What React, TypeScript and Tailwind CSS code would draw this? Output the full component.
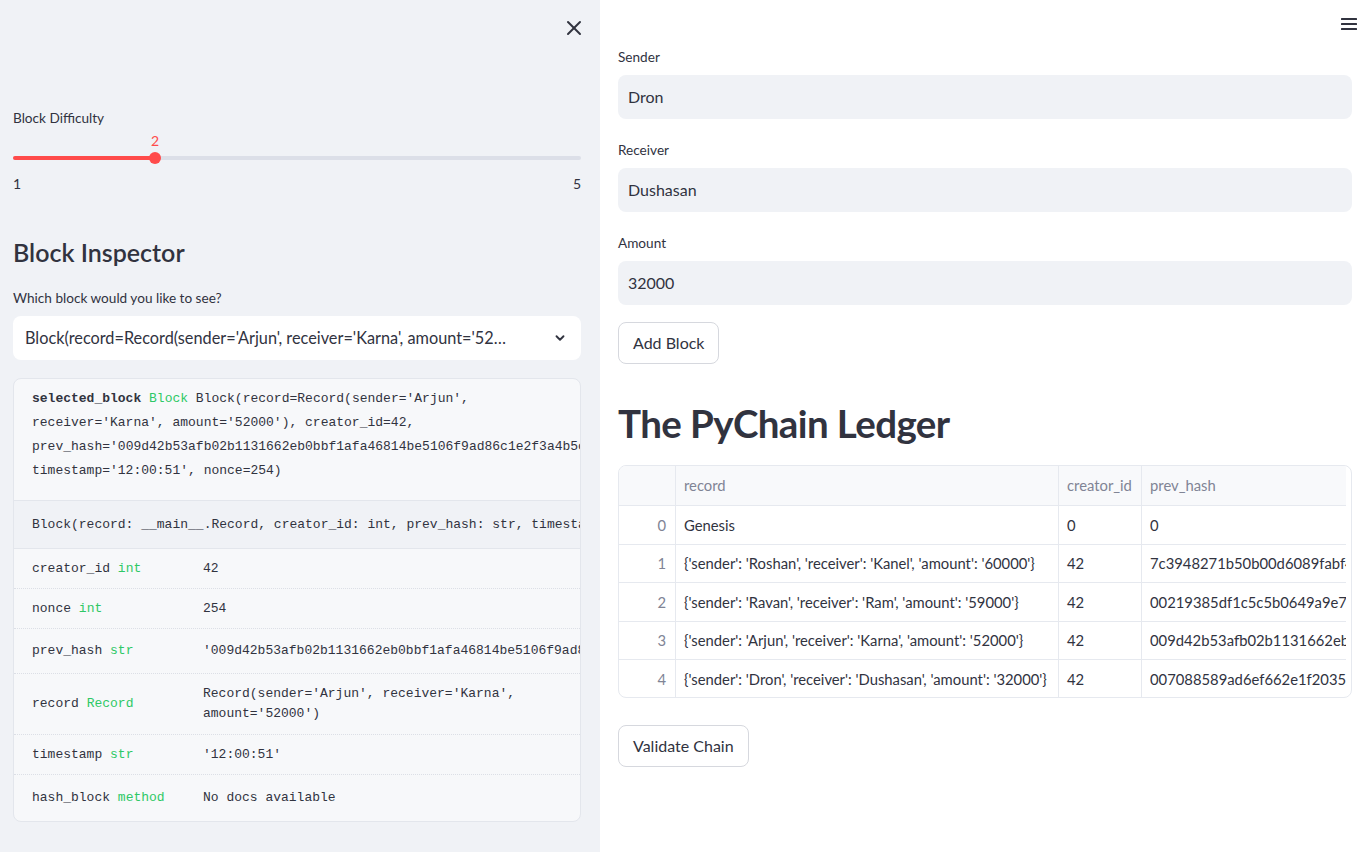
import React from 'react';

const sans = { fontFamily: 'Lato, "Noto Sans", sans-serif' };
const mono = { fontFamily: '"Liberation Mono", "DejaVu Sans Mono", monospace' };

const HASH_3 = '009d42b53afb02b1131662eb0bbf1afa46814be5106f9ad86c1e2f3a4b5c6d7e';

const ledger = [
  { idx: 0, record: 'Genesis', creator: '0', prev: '0' },
  {
    idx: 1,
    record: "{'sender': 'Roshan', 'receiver': 'Kanel', 'amount': '60000'}",
    creator: '42',
    prev: '7c3948271b50b00d6089fabf42a1e09c3b7d5f6e8a2c4b1d0e9f8a7b6c5d4e3f',
  },
  {
    idx: 2,
    record: "{'sender': 'Ravan', 'receiver': 'Ram', 'amount': '59000'}",
    creator: '42',
    prev: '00219385df1c5c5b0649a9e7821f3c4d5e6a7b8c9d0e1f2a3b4c5d6e7f8a9b0c',
  },
  {
    idx: 3,
    record: "{'sender': 'Arjun', 'receiver': 'Karna', 'amount': '52000'}",
    creator: '42',
    prev: HASH_3,
  },
  {
    idx: 4,
    record: "{'sender': 'Dron', 'receiver': 'Dushasan', 'amount': '32000'}",
    creator: '42',
    prev: '007088589ad6ef662e1f2035b07c8d9e0f1a2b3c4d5e6f7a8b9c0d1e2f3a4b5c',
  },
];

const members = [
  { name: 'creator_id', type: 'int', value: '42', h: 'h-[40px]' },
  { name: 'nonce', type: 'int', value: '254', h: 'h-[40px]' },
  { name: 'prev_hash', type: 'str', value: `'${HASH_3}'`, h: 'h-[45px]' },
  { name: 'record', type: 'Record', value: "Record(sender='Arjun', receiver='Karna', amount='52000')", h: 'h-[61px]' },
  { name: 'timestamp', type: 'str', value: "'12:00:51'", h: 'h-[40px]' },
  { name: 'hash_block', type: 'method', value: 'No docs available', h: 'h-[46px]' },
];

function TextField({ label, value }: { label: string; value: string }) {
  return (
    <div className="flex flex-col">
      <label className="text-[13.6px] leading-[20px] text-[#31333f]">{label}</label>
      <div className="mt-[8px] h-[44px] rounded-lg bg-[#f0f2f6] px-[10px] flex items-center text-base text-[#31333f]">
        {value}
      </div>
    </div>
  );
}

function Sidebar() {
  return (
    <aside className="w-[600px] shrink-0 h-[852px] bg-[#f0f2f6] pl-[13px] pr-[19px] flex flex-col overflow-hidden">
      <div className="h-[56px] flex items-center justify-end -mr-[5px]">
        <svg width="24" height="24" viewBox="0 0 24 24" fill="none" stroke="#31333f" strokeWidth="2" strokeLinecap="round">
          <path d="M18 6 6 18" />
          <path d="m6 6 12 12" />
        </svg>
      </div>

      <div className="mt-[52px] text-[13.6px] leading-[21px] text-[#31333f]">Block Difficulty</div>

      {/* slider */}
      <div className="flex flex-col">
        <div className="relative h-[23px]">
          <span className="absolute left-[142px] top-[2px] -translate-x-1/2 text-sm leading-[20px] text-[#ff4b4b]">2</span>
        </div>
        <div className="relative h-[12px] flex items-center">
          <div className="w-full h-[4px] rounded-full bg-[#dcdfe8]" />
          <div className="absolute left-0 top-[4px] w-[142px] h-[4px] rounded-full bg-[#ff4b4b]" />
          <div className="absolute left-[136px] top-0 w-[12px] h-[12px] rounded-full bg-[#ff4b4b]" />
        </div>
        <div className="mt-[10px] flex justify-between text-sm leading-[20px] text-[#31333f]">
          <span>1</span>
          <span>5</span>
        </div>
      </div>

      <h2 className="mt-[42px] text-[25px] leading-[32px] font-semibold text-[#31333f]">Block Inspector</h2>
      <div className="mt-[20px] text-[13.6px] leading-[20px] text-[#31333f]">Which block would you like to see?</div>

      <div className="mt-[8px] h-[44px] rounded-lg bg-white flex items-center pl-[12px] pr-[14px] text-[16.3px] text-[#31333f]">
        <span className="flex-1 min-w-0 truncate pr-[41px]">
          Block(record=Record(sender='Arjun', receiver='Karna', amount='52000'), creator_id=42, prev_hash='{HASH_3}', timestamp='12:00:51', nonce=254)
        </span>
        <svg width="14" height="14" viewBox="0 0 24 24" fill="none" stroke="#31333f" strokeWidth="3.2" strokeLinecap="round" strokeLinejoin="round">
          <path d="m6 9 6 6 6-6" />
        </svg>
      </div>

      {/* help box */}
      <div className="mt-[18px] rounded-lg border border-[#e3e6ec] bg-[#f7f8fa] overflow-hidden text-[13px] text-[#31333f]" style={mono}>
        <div className="px-[18px] pt-[8px] pb-[17px] leading-[24px]">
          <span className="font-bold">selected_block</span> <span className="text-[#2ec866]">Block</span>{' '}
          Block(record=Record(sender='Arjun', receiver='Karna', amount='52000'), creator_id=42, prev_hash='{HASH_3}', timestamp='12:00:51', nonce=254)
        </div>
        <div className="h-[49px] border-y border-[#e3e6ec] bg-[#f0f2f6] px-[18px] flex items-center whitespace-nowrap">
          Block(record: __main__.Record, creator_id: int, prev_hash: str, timestamp: str = '12:00:51', nonce: int = 0)
        </div>
        <div className="flex flex-col">
          {members.map((m, i) => (
            <div
              key={m.name}
              className={`${m.h} flex items-center ${i < members.length - 1 ? 'border-b border-dotted border-[#dcdfe6]' : ''}`}
            >
              <div className="w-[189px] shrink-0 pl-[18px]">
                {m.name} <span className="text-[#2ec866]">{m.type}</span>
              </div>
              <div className="min-w-0 leading-[20px]">{m.value}</div>
            </div>
          ))}
        </div>
      </div>
    </aside>
  );
}

function Main() {
  const cols = 'grid grid-cols-[57px_383px_83px_1fr]';
  return (
    <main className="flex-1 min-w-0 h-[852px] bg-white pl-[18px] pr-[19px] flex flex-col overflow-hidden">
      <div className="h-[47px] flex items-start justify-end -mr-[6px] pt-[17px]">
        <svg width="18" height="14" viewBox="0 0 18 14" fill="#31333f">
          <rect x="1" y="1" width="16" height="2" rx="0.5" />
          <rect x="1" y="6" width="16" height="2" rx="0.5" />
          <rect x="1" y="11" width="16" height="2" rx="0.5" />
        </svg>
      </div>

      <div className="flex flex-col gap-[21px]">
        <TextField label="Sender" value="Dron" />
        <TextField label="Receiver" value="Dushasan" />
        <TextField label="Amount" value="32000" />
      </div>

      <div className="mt-[17px]">
        <button className="h-[42px] px-[14px] rounded-lg border border-[#d6d8de] bg-white text-base text-[#31333f]">
          Add Block
        </button>
      </div>

      <h1 className="mt-[34px] text-[38.5px] leading-[50px] font-bold text-[#31333f] tracking-[-0.6px]">The PyChain Ledger</h1>

      <div className="mt-[17px] h-[233px] rounded-lg border border-[#e6e9ef] overflow-hidden pr-[5px]">
        <div className="h-full overflow-hidden text-[14.8px] text-[#31333f]">
          <div className={`${cols} h-[40px] bg-[#f8f9fb] border-b border-[#e6e9ef] text-[#808495]`}>
            <div className="border-r border-[#e6e9ef]" />
            <div className="border-r border-[#e6e9ef] pl-[8px] flex items-center">record</div>
            <div className="border-r border-[#e6e9ef] pl-[8px] flex items-center">creator_id</div>
            <div className="pl-[8px] flex items-center whitespace-nowrap overflow-hidden">prev_hash</div>
          </div>
          {ledger.map((r, i) => (
            <div
              key={r.idx}
              className={`${cols} h-[38.5px] ${i < ledger.length - 1 ? 'border-b border-[#e6e9ef]' : ''}`}
            >
              <div className="border-r border-[#e6e9ef] pr-[9px] flex items-center justify-end text-[#808495]">{r.idx}</div>
              <div className="border-r border-[#e6e9ef] pl-[8px] flex items-center whitespace-nowrap overflow-hidden">{r.record}</div>
              <div className="border-r border-[#e6e9ef] pl-[8px] flex items-center">{r.creator}</div>
              <div className="pl-[8px] flex items-center whitespace-nowrap overflow-hidden">{r.prev}</div>
            </div>
          ))}
        </div>
      </div>

      <div className="mt-[27px]">
        <button className="h-[42px] px-[14px] rounded-lg border border-[#d6d8de] bg-white text-base text-[#31333f]">
          Validate Chain
        </button>
      </div>
    </main>
  );
}

export default function App() {
  return (
    <div className="flex w-[1371px] h-[852px] overflow-hidden" style={sans}>
      <Sidebar />
      <Main />
    </div>
  );
}
